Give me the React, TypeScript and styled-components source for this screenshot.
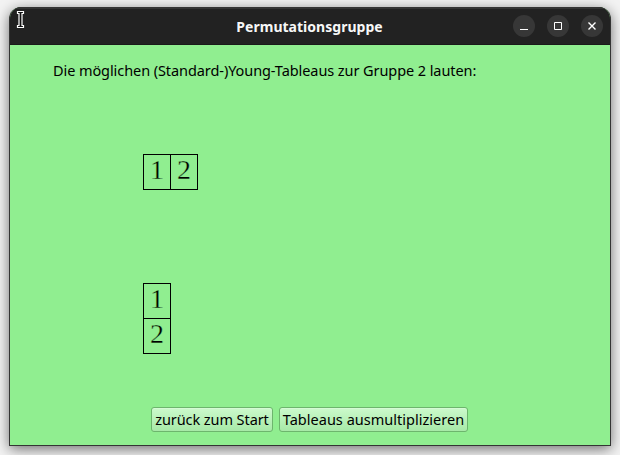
import React from "react";
import styled, { createGlobalStyle } from "styled-components";

const GlobalStyle = createGlobalStyle`
  * { box-sizing: border-box; }
  body { margin: 0; background: #f3f3f3; overflow: hidden; }
`;

const Desktop = styled.div`
  width: 620px;
  height: 455px;
  padding: 7px 9px 9px;
  overflow: hidden;
  font-family: "Noto Sans", "Open Sans", sans-serif;
  color: #000;
`;

const Window = styled.main`
  display: flex;
  flex-direction: column;
  width: 602px;
  height: 439px;
  border: 1px solid #343434;
  border-top: 0;
  border-radius: 12px 12px 0 0;
  overflow: hidden;
  background: #90ee90;
  box-shadow: 0 3px 14px rgba(0, 0, 0, 0.55);
`;

const TitleBar = styled.header`
  display: grid;
  grid-template-columns: 1fr auto 1fr;
  align-items: center;
  flex: none;
  height: 38px;
  padding: 0 7px 0 6px;
  background: #222;
  border-bottom: 1px solid #1a1a1a;
  box-shadow: inset 0 2px 0 #343434;
`;

const Cursor = styled.svg`
  display: block;
  align-self: start;
  margin-top: 3px;
`;

const Title = styled.h1`
  margin: 3px 0 0;
  font-size: 14px;
  line-height: 20px;
  font-weight: 700;
  letter-spacing: 0.02px;
  color: #f7f7f7;
`;

const Controls = styled.div`
  display: flex;
  justify-content: flex-end;
  gap: 12px;
`;

const Control = styled.button`
  width: 22px;
  height: 22px;
  padding: 0;
  border: 0;
  border-radius: 50%;
  background: #373737;
  svg { display: block; }
`;

const Content = styled.section`
  display: flex;
  flex-direction: column;
  align-items: flex-start;
  flex: 1;
`;

const Intro = styled.p`
  margin: 14px 0 0 43px;
  font-size: 14.5px;
  line-height: 22px;
  letter-spacing: -0.08px;
  white-space: nowrap;
`;

const Tableau = styled.div<{ $columns: number; $top: number }>`
  display: grid;
  grid-template-columns: repeat(${(p) => p.$columns}, 27px);
  grid-auto-rows: 35px;
  margin: ${(p) => p.$top}px 0 0 133px;
  border-top: 1px solid #000;
  border-left: 1px solid #000;
`;

const Cell = styled.span`
  border-right: 1px solid #000;
  border-bottom: 1px solid #000;
  font: 28px/30px "Liberation Serif", serif;
  text-align: center;
  -webkit-text-stroke: 0.35px #90ee90;
`;

const Actions = styled.footer`
  display: flex;
  gap: 6px;
  margin: 53px 0 0 141px;
`;

const Action = styled.button<{ $width: number; $spacing: number }>`
  width: ${(p) => p.$width}px;
  height: 25px;
  padding: 0;
  border: 1px solid #6db56d;
  border-radius: 3px;
  background: linear-gradient(#ccfacc, #a7e9a7);
  box-shadow: inset 0 1px 0 #d5fbd5;
  font: 14.5px/21px "Noto Sans", sans-serif;
  letter-spacing: ${(p) => p.$spacing}px;
  color: #000;
  white-space: nowrap;
`;

const glyphs = [
  { label: "Minimieren", path: "M7 14.5h8", width: 1 },
  { label: "Maximieren", path: "M7.5 7.5h7v7h-7z", width: 1 },
  { label: "Schließen", path: "M7.5 7.5l7 7M14.5 7.5l-7 7", width: 1.4 },
];

export default function App() {
  return (
    <Desktop>
      <GlobalStyle />
      <Window>
        <TitleBar>
          <Cursor width="9" height="19" viewBox="0 0 9 19" fill="none">
            <path
              d="M1.5 1.5h6v2h-1.5v12h1.5v2h-6v-2h1.5v-12h-1.5z"
              fill="#111"
              stroke="#fff"
              strokeWidth="1.2"
            />
          </Cursor>
          <Title>Permutationsgruppe</Title>
          <Controls>
            {glyphs.map((g) => (
              <Control key={g.label} aria-label={g.label}>
                <svg width="22" height="22" viewBox="0 0 22 22" fill="none" stroke="#fff" strokeWidth={g.width}>
                  <path d={g.path} />
                </svg>
              </Control>
            ))}
          </Controls>
        </TitleBar>
        <Content>
          <Intro>Die möglichen (Standard-)Young-Tableaus zur Gruppe 2 lauten:</Intro>
          <Tableau $columns={2} $top={73}>
            <Cell>1</Cell>
            <Cell>2</Cell>
          </Tableau>
          <Tableau $columns={1} $top={93}>
            <Cell>1</Cell>
            <Cell>2</Cell>
          </Tableau>
          <Actions>
            <Action $width={122} $spacing={-0.08}>zurück zum Start</Action>
            <Action $width={189} $spacing={0.02}>Tableaus ausmultiplizieren</Action>
          </Actions>
        </Content>
      </Window>
    </Desktop>
  );
}
